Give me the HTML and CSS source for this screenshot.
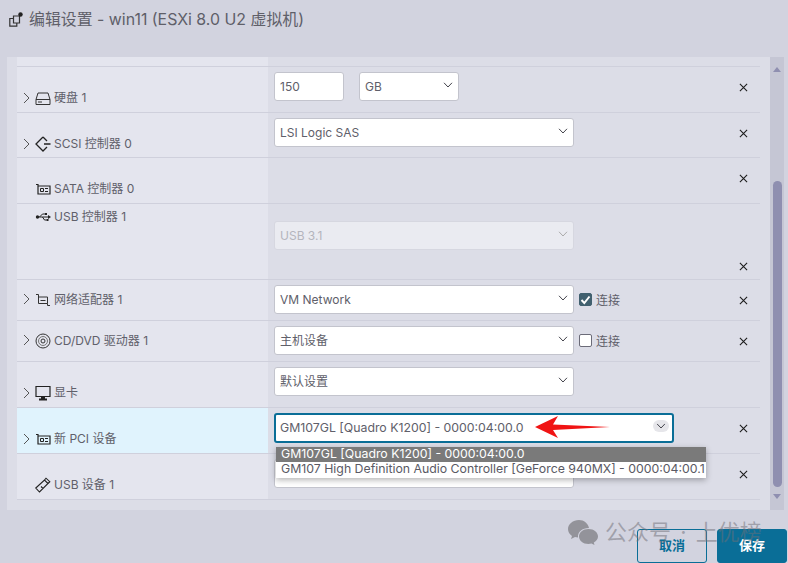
FILE: index.html
```html
<!DOCTYPE html>
<html lang="zh">
<head>
<meta charset="utf-8">
<title>编辑设置</title>
<link rel="stylesheet" href="styles.css">
</head>
<body>
<svg width="0" height="0" class="defs">
  <symbol id="chev" viewBox="0 0 10 6"><path d="M1 .8 5 5l4-4.200" fill="none" stroke="currentColor" stroke-width="1"/></symbol>
  <symbol id="x" viewBox="0 0 10 10"><path d="M1 1l8 8M9 1l-8 8" fill="none" stroke="#1c1c1c" stroke-width="1.200"/></symbol>
  <symbol id="exp" viewBox="0 0 7 12"><path d="M1 1l5 5-5 5" fill="none" stroke="#555" stroke-width="1"/></symbol>
  <symbol id="card" viewBox="0 0 16 16"><path d="M1 3.500h2v9.500h12V5H3" fill="none" stroke="#222" stroke-width="1.200"/><path d="M5.500 7.500h3v3h-3zM10 7.500h3M10 10.500h3" fill="none" stroke="#222"/></symbol>
</svg>
<div class="app">
  <header class="title">
    <svg class="title-icon" width="15" height="15" viewBox="0 0 15 15"><path d="M4.500 4h6v7h-6zM4.500 6.500H.8v7.700h7V11" fill="none" stroke="#333" stroke-width="1.200"/><circle cx="11.500" cy="2.500" r="2.200" fill="#222"/></svg>
    <span>编辑设置 - win11 (ESXi 8.0 U2 虚拟机)</span>
  </header>

  <main class="panel">
    <div class="list">
      <div class="spacer"></div>

      <div class="row h46">
        <div class="label"><svg class="exp"><use href="#exp"/></svg>
          <svg class="ico" viewBox="0 0 16 16"><path d="M3 3h10l2 6.500V14.500H1V9.500zM1 9.500h14M3 12h4" fill="none" stroke="#333" stroke-width="1"/></svg>
          <span>硬盘 1</span></div>
        <div class="ctl"><div class="box w70">150</div><div class="box w100 gap15">GB<svg class="chev"><use href="#chev"/></svg></div></div>
        <div class="rm"><svg class="x"><use href="#x"/></svg></div>
      </div>

      <div class="row h45">
        <div class="label"><svg class="exp"><use href="#exp"/></svg>
          <svg class="ico" viewBox="0 0 16 16"><path d="M8 1 1 8l7 7 4-4M12 5 8 1M9 8h6.500" fill="none" stroke="#222" stroke-width="1.300"/></svg>
          <span>SCSI 控制器 0</span></div>
        <div class="ctl"><div class="box w300">LSI Logic SAS<svg class="chev"><use href="#chev"/></svg></div></div>
        <div class="rm"><svg class="x"><use href="#x"/></svg></div>
      </div>

      <div class="row h46">
        <div class="label nokid"><svg class="ico"><use href="#card"/></svg><span>SATA 控制器 0</span></div>
        <div class="ctl"></div>
        <div class="rm"><svg class="x"><use href="#x"/></svg></div>
      </div>

      <div class="row h76">
        <div class="label nokid top"><svg class="ico" viewBox="0 0 16 16"><path d="M2 8h12M4.500 8l3-3h2.500M7.500 8l2 3h2" fill="none" stroke="#222"/><circle cx="2.500" cy="8" r="1.700" fill="#222"/><path d="M13 6l3 2-3 2z" fill="#222"/><path d="M10 4h2v2h-2zM11.500 10h2v2h-2z" fill="#222"/></svg><span>USB 控制器 1</span></div>
        <div class="ctl ctl-usb"><div class="box w300 off">USB 3.1<svg class="chev"><use href="#chev"/></svg></div></div>
        <div class="rm rm-low"><svg class="x"><use href="#x"/></svg></div>
      </div>

      <div class="row h41">
        <div class="label mid"><svg class="exp"><use href="#exp"/></svg>
          <svg class="ico" viewBox="0 0 16 16"><path d="M3.500 5h9v6.500h-9zM5.500 8.500h5M1 2.500h2.500V5M12.500 11.500v2H15" fill="none" stroke="#333"/></svg>
          <span>网络适配器 1</span></div>
        <div class="ctl"><div class="box w300">VM Network<svg class="chev"><use href="#chev"/></svg></div>
          <label class="check"><span class="cb on"><svg width="11" height="10" viewBox="0 0 11 10"><path d="M1.500 5 4.300 8 9.500 1.500" fill="none" stroke="#fff" stroke-width="2"/></svg></span>连接</label></div>
        <div class="rm"><svg class="x"><use href="#x"/></svg></div>
      </div>

      <div class="row h41">
        <div class="label mid low"><svg class="exp"><use href="#exp"/></svg>
          <svg class="ico" viewBox="0 0 16 16"><circle cx="8" cy="8" r="7" fill="none" stroke="#333"/><circle cx="8" cy="8" r="4.500" fill="none" stroke="#777"/><circle cx="8" cy="8" r="2" fill="none" stroke="#333"/></svg>
          <span>CD/DVD 驱动器 1</span></div>
        <div class="ctl"><div class="box w300">主机设备<svg class="chev"><use href="#chev"/></svg></div>
          <label class="check"><span class="cb"></span>连接</label></div>
        <div class="rm"><svg class="x"><use href="#x"/></svg></div>
      </div>

      <div class="row h46">
        <div class="label"><svg class="exp"><use href="#exp"/></svg>
          <svg class="ico" viewBox="0 0 16 16"><path d="M1 1.500h14v10H1z" fill="none" stroke="#222" stroke-width="1.200"/><path d="M6 12h4v1.500h2V15.500H4v-2h2z" fill="#222"/></svg>
          <span>显卡</span></div>
        <div class="ctl"><div class="box w300">默认设置<svg class="chev"><use href="#chev"/></svg></div></div>
        <div class="rm"></div>
      </div>

      <div class="row h46">
        <div class="label active"><svg class="exp"><use href="#exp"/></svg><svg class="ico"><use href="#card"/></svg><span>新 PCI 设备</span></div>
        <div class="ctl"><div class="box w400 focus">GM107GL [Quadro K1200] - 0000:04:00.0<svg class="chev halo"><use href="#chev"/></svg></div></div>
        <div class="rm"><svg class="x"><use href="#x"/></svg></div>
      </div>

      <div class="row h46">
        <div class="label nokid"><svg class="ico" viewBox="0 0 16 16"><path d="M.8 11 9.500 3l3.500 3.500-8.500 8.500zM9.500 3 11 1.200l3.800 3.500L13 6.500M6 9.500l2 2" fill="none" stroke="#222" stroke-width="1.100"/></svg><span>USB 设备 1</span></div>
        <div class="ctl"><div class="box w300"></div></div>
        <div class="rm"><svg class="x"><use href="#x"/></svg></div>
      </div>
    </div>

    <div class="scroll">
      <span class="sb-up"></span>
      <span class="thumb"></span>
      <span class="sb-down"></span>
    </div>
  </main>

  <footer class="foot">
    <button class="btn ghost">取消</button>
    <button class="btn solid">保存</button>
  </footer>

  <ul class="menu">
    <li class="sel">GM107GL [Quadro K1200] - 0000:04:00.0</li>
    <li>GM107 High Definition Audio Controller [GeForce 940MX] - 0000:04:00.1</li>
  </ul>

  <svg class="arrow" width="76" height="24" viewBox="0 0 76 24"><path d="M0 12 23 1 18 9.500 75 12 18 15 23 23z" fill="#f01414"/></svg>

  <div class="mark">
    <svg width="31" height="25" viewBox="0 0 31 25"><path d="M11 0C5 0 0 4 0 9c0 3 1.500 5 4 7l-1 3 4-2c1 .3 2 .5 3 .5C9.500 12 14 8 21 8c-1-4.500-5-8-10-8z" fill="#8d8d93"/><path d="M20.500 9C15 9 11 12.500 11 16.500S15 24 20.500 24c1 0 2-.2 3-.5l3 1.500-.7-2.500c2.700-1.500 4.200-3.700 4.200-6C30 12.500 26 9 20.500 9z" fill="#8d8d93"/></svg>
    <span>公众号 · 上优榜</span>
  </div>
</div>
</body>
</html>
```
FILE: styles.css
```css
* { box-sizing: border-box; }
html, body { margin: 0; height: 100%; }
body {
  background: #d2d3df;
  font-family: Inter, "Noto Sans CJK SC", sans-serif;
  font-size: 12px;
  color: #60606a;
  overflow: hidden;
}
.defs { position: absolute; }
.app { position: relative; width: 788px; height: 563px; display: flex; flex-direction: column; }

.title { height: 57px; padding: 12px 0 0 9px; display: flex; align-items: flex-start; gap: 5px; font-size: 15.900px; line-height: 16px; color: #5f5f69; }
.title-icon { margin-top: 0; }

.panel { height: 453px; margin: 0 4px 0 7px; padding-left: 10px; display: flex; background: #dcdde7; }
.list { width: 743px; height: 443px; background: linear-gradient(90deg, #e4e5ee 251px, transparent 251px); }
.spacer { height: 10px; border-bottom: 1px solid #cfd0dc; }

.row { display: grid; grid-template-columns: 251px 1fr 34px; border-bottom: 1px solid #cfd0dc; }
.h46 { height: 46px; }
.h45 { height: 45px; }
.h76 { height: 76px; }
.h41 { height: 41px; }

.label { display: flex; align-items: flex-end; padding: 0 0 6px 6px; line-height: 16px; }
.h45 .label { padding-bottom: 5px; }
.label.mid { align-items: center; padding-bottom: 1px; }
.label.low { padding-bottom: 0; }
.label.top { align-items: flex-start; padding-top: 5px; }
.label.nokid { padding-left: 18px; }
.label.active { background: #e0f3fd; }
.exp { width: 7px; height: 12px; margin: 0 5px 2px 0; flex: none; }
.ico { width: 16px; height: 16px; margin-right: 3px; flex: none; }
.label span { white-space: nowrap; }

.ctl { padding: 5px 0 0 6px; display: flex; align-items: flex-start; }
.ctl-usb { padding-top: 17px; }

.box { position: relative; height: 29px; padding: 0 5px; line-height: 27px; background: #fff; border: 1px solid #c3c4cd; border-radius: 3px; flex: none; }
.w70 { width: 70px; }
.w100 { width: 100px; }
.w300 { width: 300px; }
.w400 { width: 400px; height: 30px; font-size: 12.300px; line-height: 25px; padding: 0 4px; }
.gap15 { margin-left: 15px; }
.chev { position: absolute; right: 5px; top: 9px; width: 10px; height: 6px; color: #44444c; }
.off { background: #eaebf1; color: #b4b5bd; border-color: #d6d7e0; }
.off .chev { color: #aaa; }
.focus { border: 2px solid #0a6e97; }
.halo { right: 6px; top: 8px; background: #e6e6ea; border-radius: 4px; box-shadow: 0 0 0 3px #e6e6ea; }

.check { display: flex; align-items: center; height: 29px; margin-left: 5px; gap: 4px; }
.cb { width: 13px; height: 13px; border: 1px solid #6b6b78; border-radius: 2px; background: #fff; display: flex; align-items: center; justify-content: center; }
.cb.on { background: #41606f; border-color: #41606f; }

.rm { display: flex; align-items: flex-start; padding: 16px 0 0 13px; }
.rm-low { align-items: flex-end; padding: 0 0 8px 13px; }
.x { width: 9px; height: 9px; }

.scroll { margin-left: 10px; width: 14px; height: 453px; background: #c5c6d4; position: relative; }
.thumb { position: absolute; left: 3px; top: 124px; width: 9px; height: 306px; background: #8f8fb0; border-radius: 5px; }
.sb-up, .sb-down { position: absolute; left: 3px; width: 0; height: 0; border-left: 4.500px solid transparent; border-right: 4.500px solid transparent; }
.sb-up { top: 10px; border-bottom: 5px solid #8f8fb0; }
.sb-down { top: 437px; border-top: 5px solid #8f8fb0; }

.foot { flex: 1; display: flex; justify-content: flex-end; align-items: flex-end; gap: 10px; padding-right: 1px; }
.btn { width: 70px; height: 34px; font: bold 13px Inter, "Noto Sans CJK SC", sans-serif; border-radius: 3px; padding: 0 0 4px; }
.ghost { border: 1px solid #0a6e97; background: transparent; color: #0a6e97; }
.solid { border: 1px solid #0a6e97; background: #0a6e97; color: #fff; }

.menu { position: absolute; left: 276px; top: 447px; width: 430px; height: 31px; margin: 0; padding: 0; list-style: none; background: #fff; box-shadow: 0 2px 6px rgba(0,0,0,.3); font-size: 12.300px; line-height: 13px; color: #5a5a64; white-space: nowrap; }
.menu li { height: 15px; padding-left: 5px; }
.menu .sel { background: #7a7a7a; color: #fff; }

.arrow { position: absolute; left: 535px; top: 415px; }

.mark { position: absolute; left: 568px; top: 519px; display: flex; align-items: center; gap: 6px; font-size: 22px; line-height: 26px; word-spacing: 3px; color: rgba(110,110,118,.5); white-space: nowrap; }
.mark svg { opacity: .9; }
```
